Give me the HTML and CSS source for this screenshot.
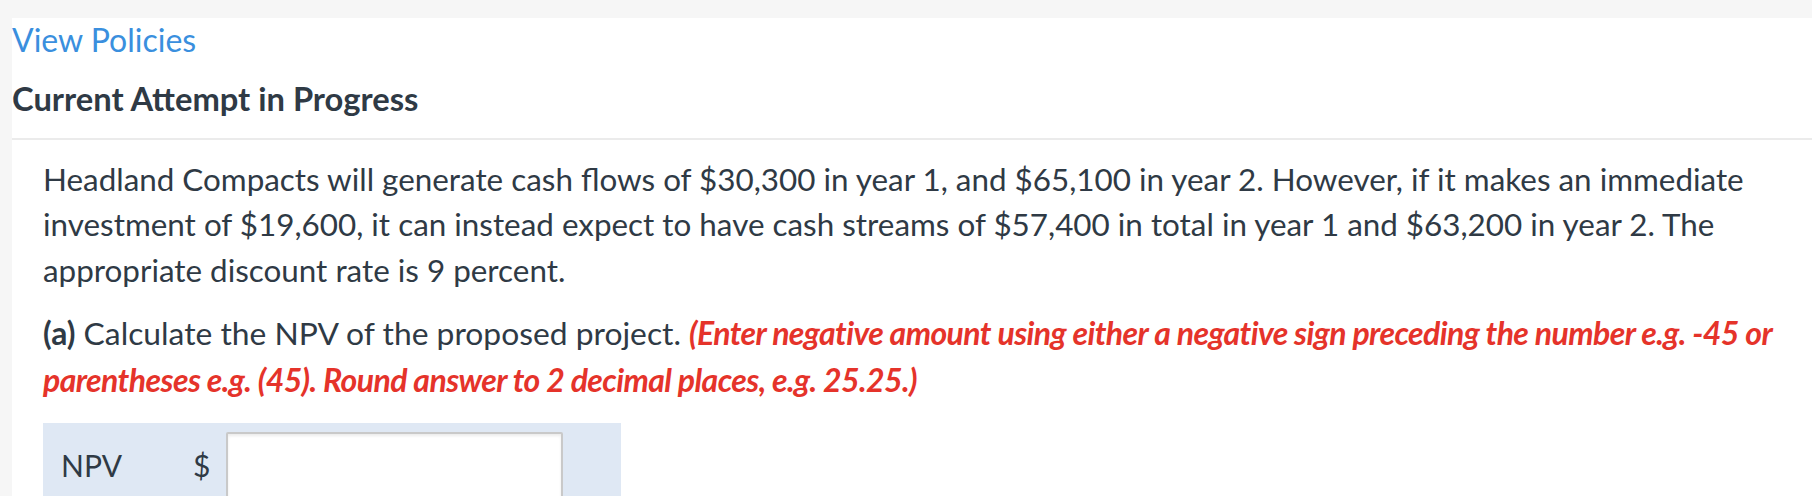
FILE: index.html
```html
<!DOCTYPE html>
<html lang="en">
<head>
<meta charset="utf-8">
<title>Current Attempt in Progress</title>
<link rel="stylesheet" href="styles.css">
</head>
<body>
<div class="page">
  <div class="header">
    <a class="policies" href="#">View Policies</a>
    <h2 class="attempt">Current Attempt in Progress</h2>
  </div>
  <div class="question">
    <p class="stem">Headland Compacts will generate cash flows of $30,300 in year 1, and $65,100 in year 2. However, if it makes an immediate investment of $19,600, it can instead expect to have cash streams of $57,400 in total in year 1 and $63,200 in year 2. The appropriate discount rate is 9 percent.</p>
    <p class="part"><b>(a)</b> Calculate the NPV of the proposed project. <em class="note">(Enter negative amount using either a negative sign preceding the number e.g. -45 or parentheses e.g. (45). Round answer to 2 decimal places, e.g. 25.25.)</em></p>
    <div class="answer">
      <span class="label">NPV</span>
      <span class="currency">$</span>
      <input class="field" type="text" aria-label="NPV">
    </div>
  </div>
</div>
</body>
</html>
```

FILE: styles.css
```css
html, body {
  margin: 0;
  padding: 0;
}
body {
  background: #f6f6f6;
  font-family: Lato, "Open Sans", "Liberation Sans", sans-serif;
  color: #2f3a45;
  font-size: 31.4px;
  line-height: 45.7px;
}
.page {
  margin-top: 18px;
  margin-left: 12px;
  background: #ffffff;
  min-height: 478px;
}
.header {
  padding-top: 2px;
  padding-bottom: 16px;
  border-bottom: 2px solid #ebebeb;
}
.policies {
  display: block;
  color: #3a8fde;
  text-decoration: none;
  font-size: 32px;
  line-height: 40px;
}
.attempt {
  margin: 16px 0 0 0;
  font-size: 32.7px;
  font-weight: 700;
  line-height: 45.7px;
}
.question {
  padding: 17px 31px 0 31px;
}
.stem {
  margin: 0;
}
.part {
  margin: 16px 0 0 0;
  font-size: 31.8px;
}
.part b {
  font-weight: 700;
}
.note {
  color: #e5332a;
  font-size: 32px;
  font-weight: 700;
  font-style: italic;
  letter-spacing: -0.58px;
}
.answer {
  margin-top: 20px;
  width: 578px;
  box-sizing: border-box;
  background: #dfe8f4;
  padding: 9px 0 12px 18px;
  display: flex;
  align-items: center;
}
.label {
  font-size: 30px;
  width: 132px;
}
.currency {
  font-size: 30px;
  width: 33px;
}
.field {
  box-sizing: border-box;
  width: 337px;
  height: 68px;
  border: 2px solid #c9c9c9;
  border-radius: 2px;
  background: #fff;
  box-shadow: inset 0 2px 3px rgba(0, 0, 0, 0.08);
  font-family: inherit;
  font-size: 30px;
  padding: 0 12px;
}
```
